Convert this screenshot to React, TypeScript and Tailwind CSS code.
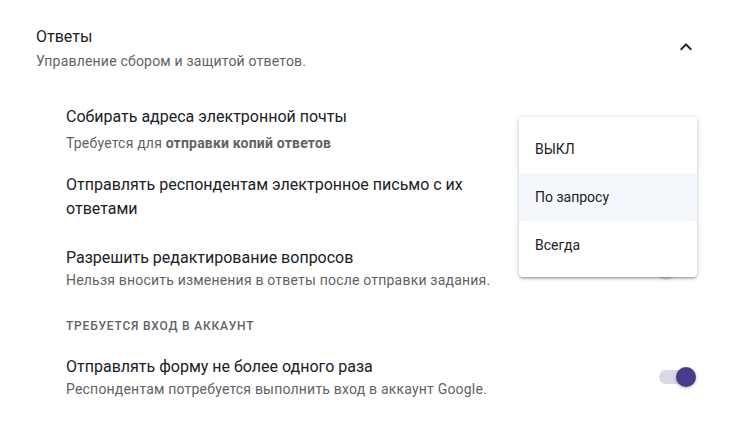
import React from 'react';

interface SettingRowProps {
    title: string;
    subtitle?: React.ReactNode;
    checked?: boolean;
    className?: string;
}

const Toggle: React.FC<{ checked?: boolean }> = ({ checked }) => (
    <div className="relative w-[37px] h-[20px] flex items-center shrink-0">
        <div className={`w-[34px] h-[14px] rounded-full ${checked ? 'bg-[#dad8e9]' : 'bg-[#bdbdbd]'}`} />
        <div
            className={`absolute top-0 w-[20px] h-[20px] rounded-full shadow-[0_1px_3px_rgba(0,0,0,0.3)] ${
                checked ? 'right-0 bg-[#483d8b]' : 'left-[-3px] bg-[#fafafa]'
            }`}
        />
    </div>
);

const SettingRow: React.FC<SettingRowProps> = ({ title, subtitle, checked, className }) => (
    <div className={`flex items-center justify-between ${className ?? ''}`}>
        <div className="max-w-[440px]">
            <div className="text-[16px] leading-[24px] text-[#202124]">{title}</div>
            {subtitle}
        </div>
        <Toggle checked={checked} />
    </div>
);

const menuItems = ['ВЫКЛ', 'По запросу', 'Всегда'];

export default function App() {
    return (
        <div className="relative w-[736px] h-[429px] bg-white overflow-hidden font-[Roboto,sans-serif]">
            <div className="pt-[25px] pl-[36px] pr-[38px]">
                {/* section header */}
                <div className="flex items-center justify-between">
                    <div>
                        <div className="text-[16px] leading-[24px] text-[#202124]">Ответы</div>
                        <div className="mt-[2px] text-[14px] leading-[20px] tracking-[0.2px] text-[#5f6368]">
                            Управление сбором и защитой ответов.
                        </div>
                    </div>
                    <svg width="24" height="24" viewBox="0 0 24 24" className="-mt-[2px] fill-[#202124]">
                        <path d="M12 8l-6 6 1.41 1.41L12 10.83l4.59 4.58L18 14z" />
                    </svg>
                </div>

                <div className="pl-[30px] pr-[2px]">
                    <SettingRow
                        className="mt-[34px]"
                        title="Собирать адреса электронной почты"
                        subtitle={
                            <div className="mt-[4px] text-[14px] leading-[20px] tracking-[0.2px] text-[#5f6368]">
                                Требуется для <span className="font-bold">отправки копий ответов</span>
                            </div>
                        }
                    />
                    <SettingRow
                        className="mt-[20px]"
                        title="Отправлять респондентам электронное письмо с их ответами"
                    />
                    <SettingRow
                        className="mt-[25px]"
                        title="Разрешить редактирование вопросов"
                        subtitle={
                            <div className="text-[14px] leading-[20px] tracking-[0.2px] text-[#5f6368]">
                                Нельзя вносить изменения в ответы после отправки задания.
                            </div>
                        }
                    />

                    <div className="mt-[28px] text-[12px] leading-[16px] font-medium tracking-[0.8px] text-[#5f6368]">
                        ТРЕБУЕТСЯ ВХОД В АККАУНТ
                    </div>

                    <SettingRow
                        className="mt-[21px]"
                        checked
                        title="Отправлять форму не более одного раза"
                        subtitle={
                            <div className="text-[14px] leading-[20px] tracking-[0.2px] text-[#5f6368]">
                                Респондентам потребуется выполнить вход в аккаунт Google.
                            </div>
                        }
                    />
                </div>
            </div>

            {/* open dropdown menu */}
            <div className="absolute left-[519px] top-[117px] w-[178px] py-[8px] bg-white rounded-[4px] shadow-[0_2px_2px_0_rgba(0,0,0,0.14),0_3px_1px_-2px_rgba(0,0,0,0.12),0_1px_5px_0_rgba(0,0,0,0.2)]">
                {menuItems.map((item, i) => (
                    <div
                        key={item}
                        className={`h-[48px] flex items-center px-[16px] text-[14px] text-[#202124] ${
                            i === 1 ? 'bg-[#f4f7fc]' : ''
                        }`}
                    >
                        {item}
                    </div>
                ))}
            </div>
        </div>
    );
}
